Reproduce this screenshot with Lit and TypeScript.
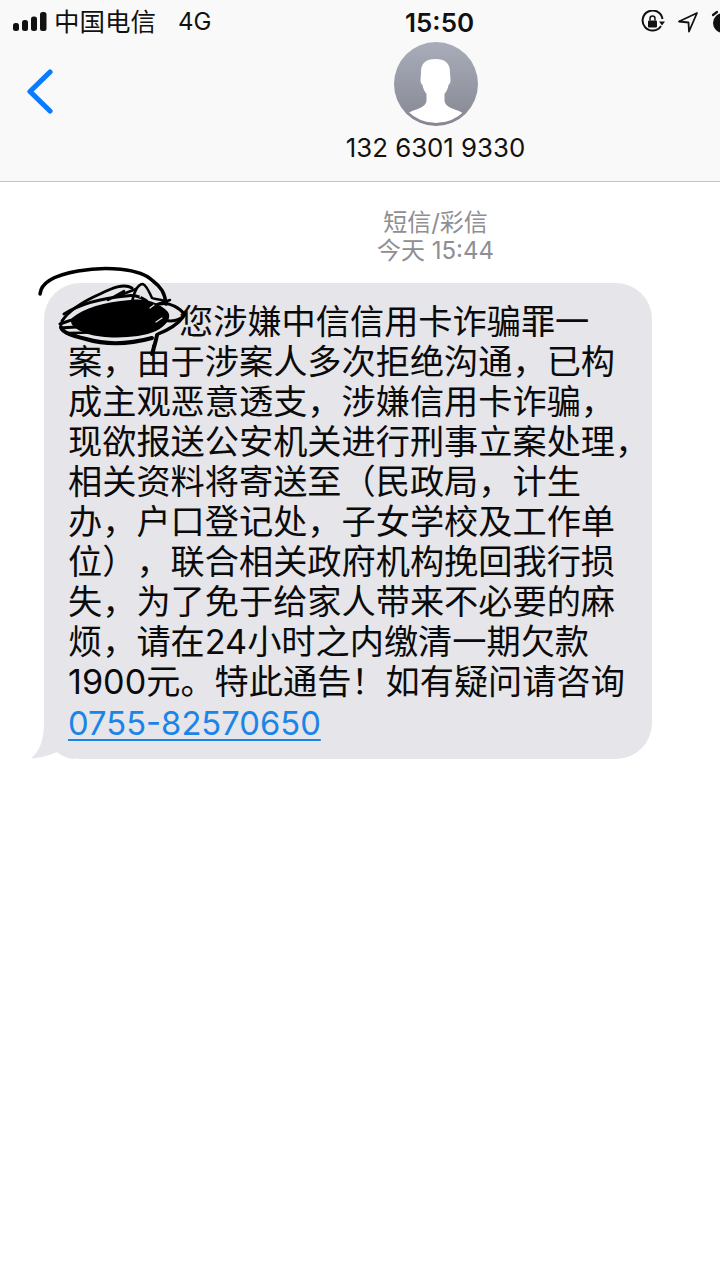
import { LitElement, html, css, svg } from "lit";
import { customElement } from "lit/decorators.js";

const LINES = [
  "案，由于涉案人多次拒绝沟通，已构",
  "成主观恶意透支，涉嫌信用卡诈骗，",
  "现欲报送公安机关进行刑事立案处理，",
  "相关资料将寄送至（民政局，计生",
  "办，户口登记处，子女学校及工作单",
  "位），联合相关政府机构挽回我行损",
  "失，为了免于给家人带来不必要的麻",
  "烦，请在24小时之内缴清一期欠款",
  "1900元。特此通告！如有疑问请咨询",
];

@customElement("app-root")
export class AppRoot extends LitElement {
  static styles = css`
    :host { display: block; width: 720px; height: 1280px; background: #fff; position: relative; overflow: hidden;
      font-family: "Inter", "Noto Sans CJK SC", sans-serif; color: #000; }
    .header { height: 181px; background: #f9f9f9; border-bottom: 1px solid #c4c4c6; display: flex; flex-direction: column; position: relative; box-sizing: content-box; }
    .status { height: 42px; display: grid; grid-template-columns: 392px auto 1fr; align-items: center; padding: 1px 0 0 13px; }
    .left { display: flex; align-items: center; font-size: 25.5px; line-height: 42px; color: #111; }
    .signal { width: 34px; height: 21px; margin-right: 7px; display: block; }
    .net { font-size: 24px; margin-left: 22px; }
    .time { font-size: 26px; font-weight: 600; color: #111; }
    .right { display: flex; justify-content: flex-end; align-items: center; gap: 12px; margin-right: -11px; }
    .right svg { display: block; }
    .contact { display: flex; flex-direction: column; align-items: center; padding-left: 151px; }
    .avatar { width: 84px; height: 84px; display: block; margin: -1px 0 0 1px; }
    .number { font-size: 25.8px; line-height: 30px; margin-top: 7px; color: #111; }
    .back { position: absolute; left: 26px; top: 68px; width: 28px; height: 46px; }
    .meta { text-align: center; font-size: 24px; line-height: 27.5px; color: #8e8e93; margin-top: 27px; padding-left: 151px; }
    .bubble-row { position: relative; margin: 19px 0 0 44px; width: 608px; }
    .bubble { position: relative; background: #e5e5ea; border-radius: 36px; padding: 19px 0 0 24px; box-sizing: border-box; height: 476px; font-size: 34.2px; line-height: 40px; color: #0b0b0b; }
    .line { white-space: nowrap; }
    .full { text-spacing-trim: space-all; }
    .first { padding-left: 111px; }
    .link-line { padding-top: 1px; }
    .phone { color: #1b84e8; text-decoration: underline; text-decoration-thickness: 2px; text-underline-offset: 4px; font-size: 32.75px; }
    .tail { position: absolute; left: -14px; bottom: 0; width: 50px; height: 36px; display: block; }
    .scribble { position: absolute; left: 30px; top: 260px; width: 170px; height: 100px; pointer-events: none; }
  `;

  private scribble() {
    return html`<svg class="scribble" viewBox="30 260 170 100" fill="none" stroke="#000" stroke-linecap="round" stroke-linejoin="round">
      ${svg`
      <path stroke-width="3.500" d="M40 294C41 283 55 275 78 271C105 266 140 268 153 281C161 287 165 293 166 304"/>
      <path fill="#000" stroke="none" d="M72 318C84 308 104 302 130 300C148 298 160 304 168 312C172 318 166 326 156 331C138 339 104 339 88 334C76 330 68 324 72 318Z"/>
      <path stroke-width="3" d="M62 321C70 309 84 301 100 294C112 288 124 283 132 288"/>
      <path stroke-width="3" d="M64 314C80 304 104 298 126 296C138 294 146 300 150 304"/>
      <path stroke-width="2.500" d="M132 302C134 292 138 284 143 284C147 286 149 292 152 298C156 300 164 298 168 304"/>
      <path stroke-width="3" d="M160 304C170 302 180 308 185 315C180 320 172 322 164 320"/>
      <path stroke-width="3.500" d="M183 317C178 324 168 330 158 334"/>
      <path stroke-width="3" d="M60 324C70 320 84 316 100 316M61 328C74 326 88 328 102 324"/>
      <path stroke-width="4" d="M61 327C62 333 74 336 86 339C106 345 130 344 152 338"/>
      <path stroke-width="2.500" d="M66 333C82 332 96 334 110 330"/>
      <path stroke-width="4" d="M157 335C156 341 154 347 152 354"/>
      <path stroke-width="2.500" d="M108 300L124 291M118 296L136 289M152 306L170 300"/>
      <path stroke="#e5e5ea" stroke-width="1.200" d="M140 297L144 291M156 322L162 318M150 308L154 305"/>
      `}
    </svg>`;
  }

  render() {
    return html`
      <div class="header">
        <div class="status">
          <div class="left">
            <svg class="signal" viewBox="0 0 34 21">
              <rect x="0" y="11" width="6" height="8" rx="2.500" fill="#111"/>
              <rect x="9" y="8" width="6" height="11" rx="2.500" fill="#111"/>
              <rect x="18" y="4.500" width="6" height="14.500" rx="2.500" fill="#111"/>
              <rect x="27" y="0" width="6.500" height="19" rx="2.500" fill="#111"/>
            </svg>
            <span>中国电信</span><span class="net">4G</span>
          </div>
          <div class="time">15:50</div>
          <div class="right">
            <svg width="24" height="24" viewBox="0 0 24 24" fill="none" stroke="#111" stroke-width="2">
              <path d="M20 16A10 10 0 1 1 21.500 9"/>
              <path d="M18 11.500h6l-3 4z" fill="#111" stroke="none"/>
              <rect x="7" y="10.500" width="9" height="7" rx="1" fill="#111" stroke="none"/>
              <path d="M9 10.500V8.500a2.500 2.500 0 0 1 5 0v2" stroke-width="1.500"/>
            </svg>
            <svg width="22" height="22" viewBox="0 0 22 22" fill="none" stroke="#111" stroke-width="1.800" stroke-linejoin="round">
              <path d="M20 2L2 10.500L11.500 11.500L12 20.500Z"/>
            </svg>
            <svg width="20" height="24" viewBox="0 0 20 24">
              <circle cx="12" cy="13" r="10" fill="#111"/>
              <path d="M2 5l4-3" stroke="#111" stroke-width="2.200" stroke-linecap="round"/>
              <path d="M12 7v6h4" stroke="#f9f9f9" stroke-width="2" fill="none"/>
            </svg>
          </div>
        </div>
        <div class="contact">
          <svg class="avatar" viewBox="0 0 84 84">
            <defs>
              <linearGradient id="g" x1="0" y1="0" x2="0" y2="1">
                <stop offset="0" stop-color="#a9adb9"/><stop offset="1" stop-color="#858893"/>
              </linearGradient>
              <clipPath id="c"><circle cx="42" cy="41" r="40"/></clipPath>
            </defs>
            <circle cx="42" cy="42" r="42" fill="url(#g)"/>
            <path clip-path="url(#c)" fill="#fff" d="M41.500 17C32 17 27 21 27 30C27 33 26.500 36 26.500 38C26.500 41 27.500 42 28.500 43C29 47 31 50 32.500 52L32.500 59C32 62 30 64 26 66C21 68 16 69.500 13 72C20 84 64 84 70 72C67 69.500 62 68 57 66C53 64 51 62 50.500 59L50.500 52C52 50 54 47 54.500 43C55.500 42 56.500 41 56.500 38C56.500 36 56 33 56 30C56 21 51 17 41.500 17Z"/>
          </svg>
          <div class="number">132 6301 9330</div>
        </div>
        <svg class="back" viewBox="0 0 28 46" fill="none" stroke="#0a7aff" stroke-width="5.200" stroke-linecap="round" stroke-linejoin="round">
          <path d="M24 4L4 23.500L24 43"/>
        </svg>
      </div>
      <div class="meta">短信/彩信<br />今天 15:44</div>
      <div class="bubble-row">
        <svg class="tail" viewBox="0 0 50 36"><path fill="#e5e5ea" d="M14 0C14 16 10 28 1 35.500C10 35 20 32 27 29C32 33 38 36 45 36L50 0Z"/></svg>
        <div class="bubble">
          <div class="line first">您涉嫌中信信用卡诈骗罪一</div>
          ${LINES.map((l, i) => html`<div class="line ${i === 5 ? "full" : ""}">${l}</div>`)}
          <div class="line link-line"><span class="phone">0755-82570650</span></div>
        </div>
      </div>
      ${this.scribble()}
    `;
  }
}
